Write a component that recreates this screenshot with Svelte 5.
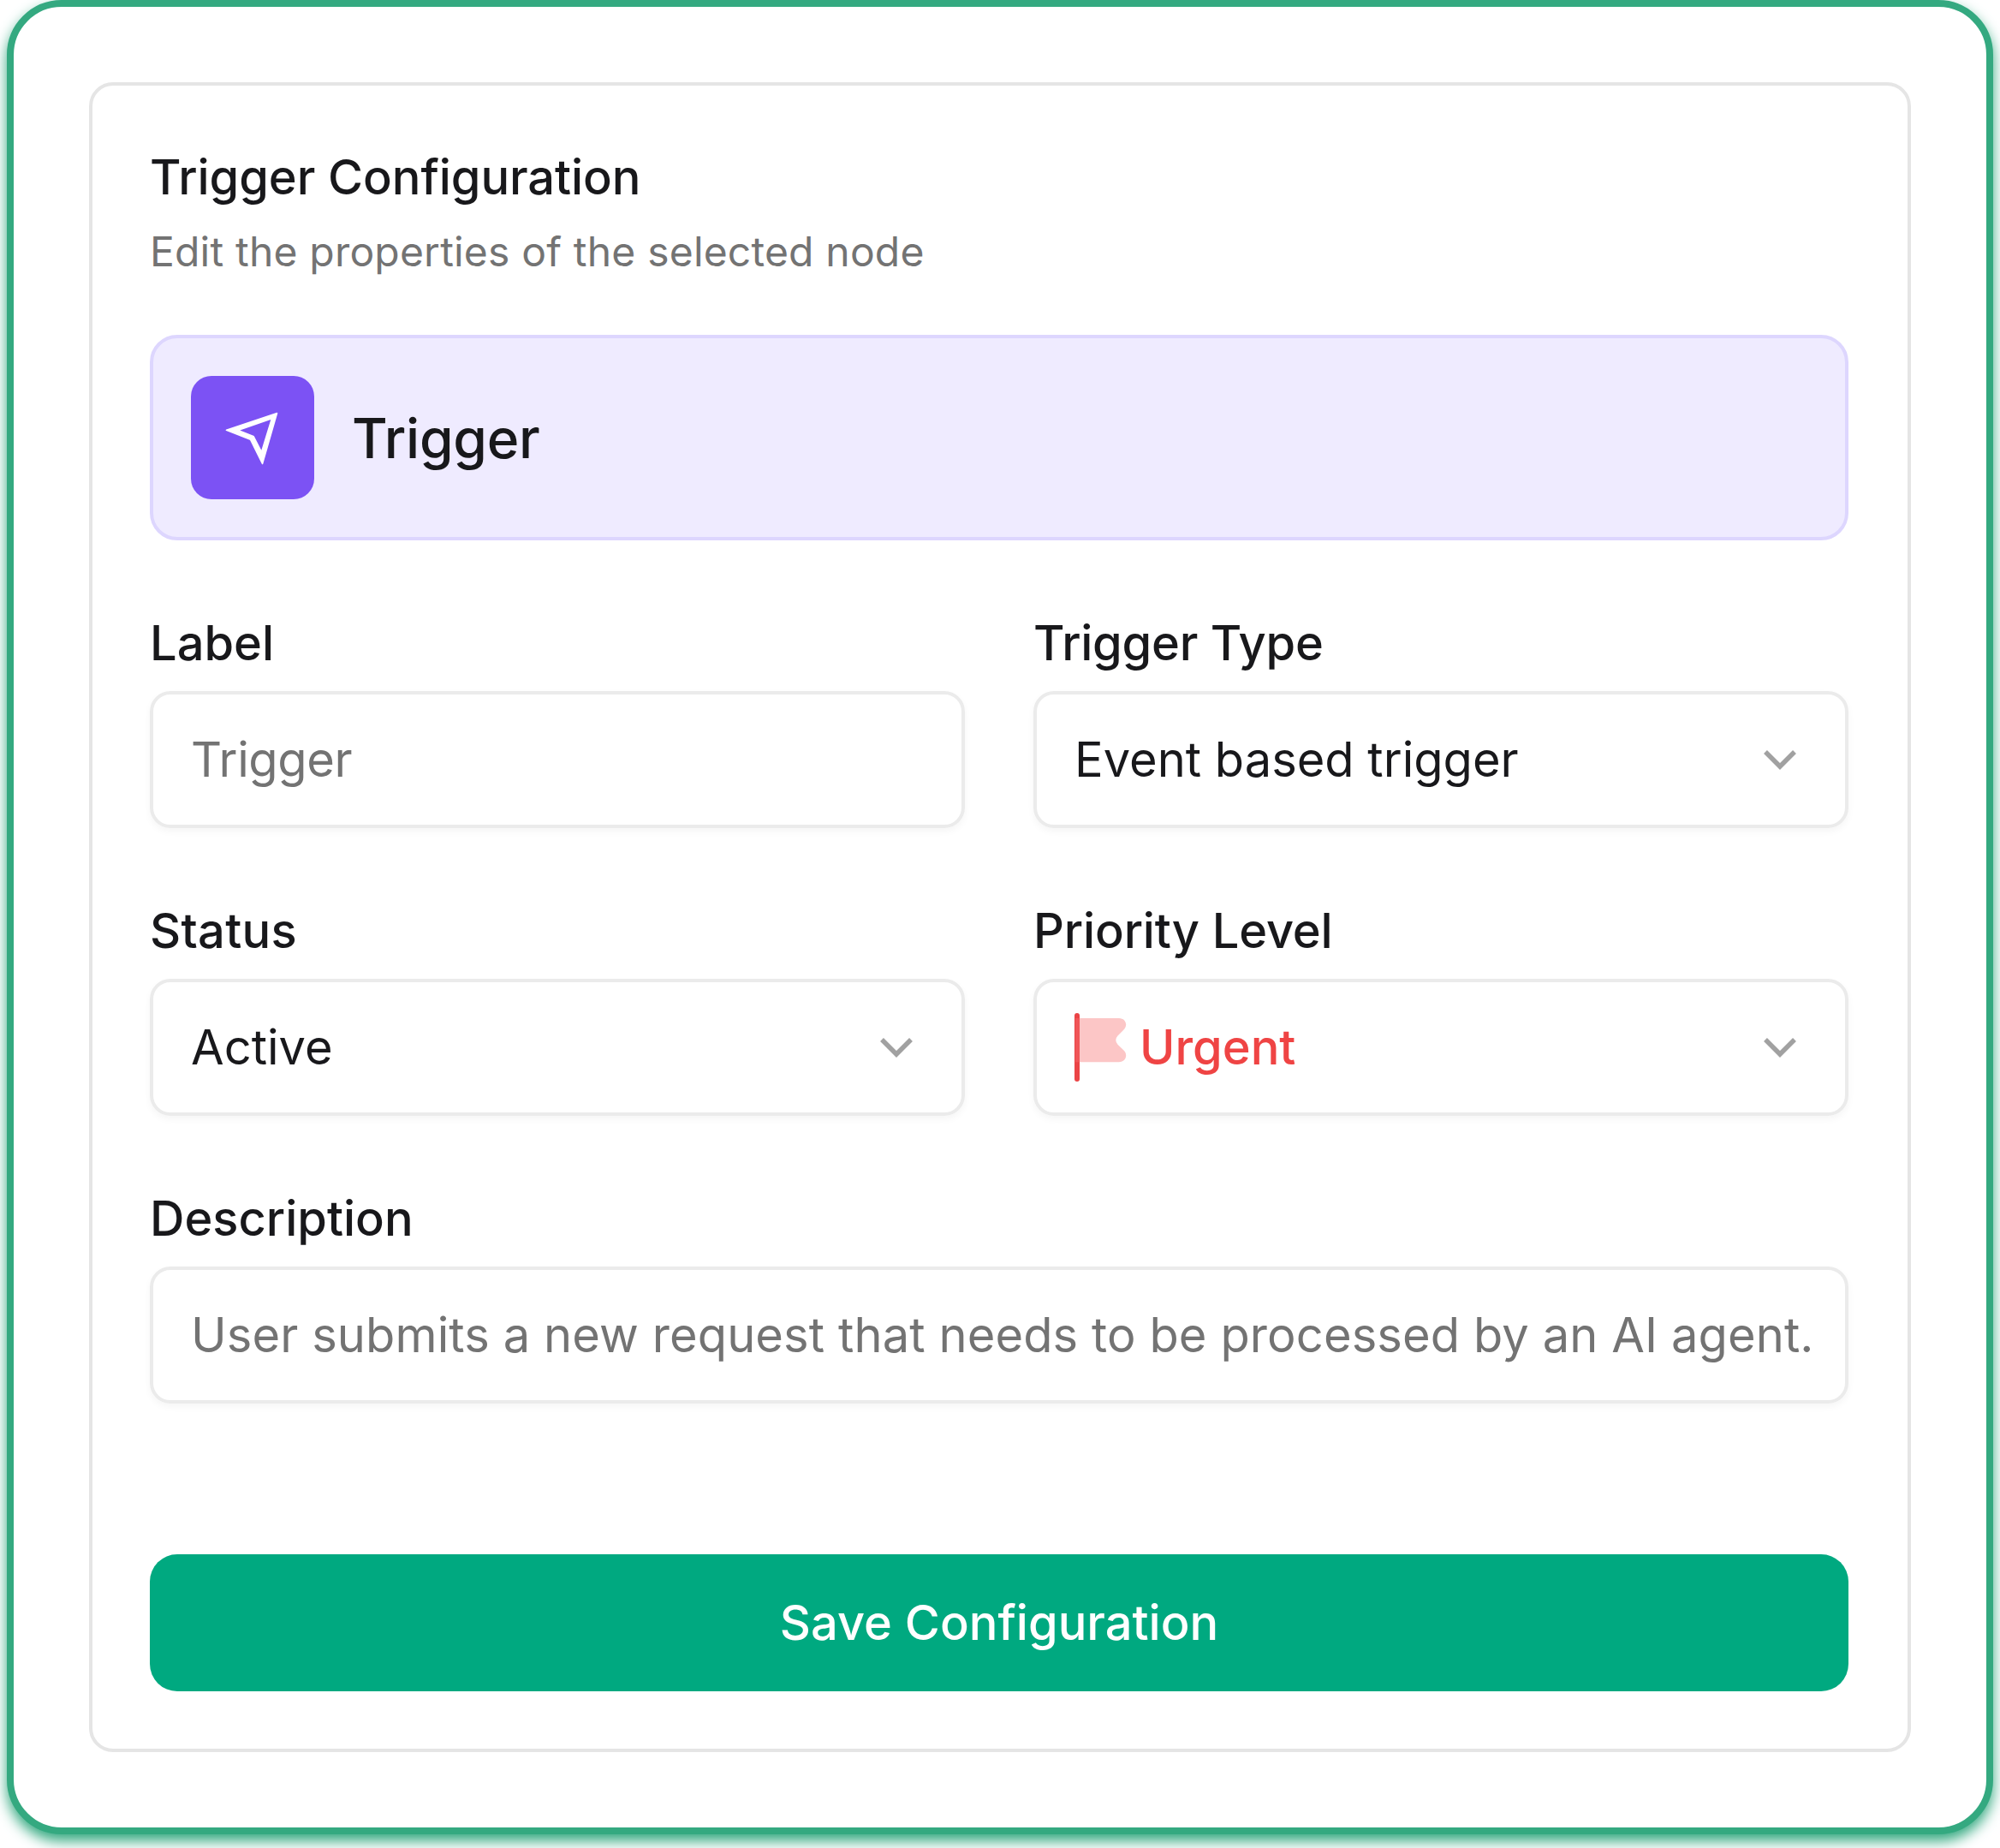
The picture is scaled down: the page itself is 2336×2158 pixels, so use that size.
<script lang="ts">
	type Field = {
		id: string;
		label: string;
		value: string;
		kind: 'text' | 'select';
		urgent?: boolean;
		wide?: boolean;
	};

	const fields: Field[] = [
		{ id: 'name', label: 'Label', value: 'Trigger', kind: 'text' },
		{ id: 'type', label: 'Trigger Type', value: 'Event based trigger', kind: 'select' },
		{ id: 'status', label: 'Status', value: 'Active', kind: 'select' },
		{ id: 'priority', label: 'Priority Level', value: 'Urgent', kind: 'select', urgent: true },
		{
			id: 'description',
			label: 'Description',
			value: 'User submits a new request that needs to be processed by an AI agent.',
			kind: 'text',
			wide: true
		}
	];
</script>

<main class="page">
	<div class="frame">
		<section class="card">
			<h1>Trigger Configuration</h1>
			<p class="subtitle">Edit the properties of the selected node</p>

			<div class="node">
				<div class="node-icon">
					<svg width="72" height="72" viewBox="0 0 72 72">
						<path
							d="M5.500 27.300L64.500 7.600L47.500 66.500L33.500 38.200Z M21.300 27.500L37.700 34L46.300 50.700L57.300 15Z"
							fill="#fff"
							fill-rule="evenodd"
						/>
						<path
							d="M5.500 27.300L64.500 7.600L47.500 66.500L33.500 38.200Z"
							fill="none"
							stroke="#fff"
							stroke-width="1.6"
							stroke-linejoin="round"
						/>
					</svg>
				</div>
				<span class="node-name">Trigger</span>
			</div>

			<div class="fields">
				{#each fields as field (field.id)}
					<div class="field {field.id}" class:wide={field.wide}>
						<span class="label">{field.label}</span>
						<div class="control" class:placeholder={field.kind === 'text'} class:urgent={field.urgent}>
							{#if field.urgent}
								<svg class="flag" width="64" height="80" viewBox="0 0 64 80">
									<path d="M3 3V77" stroke="#eb4446" stroke-width="6" stroke-linecap="round" />
									<path
										d="M1 6H52C60 6 63 15 57 20L50.500 26.500Q46 31.600 50.500 36.700L57 43C63 48 60 57.200 52 57.200H1Z"
										fill="#f87171"
										fill-opacity="0.4"
									/>
								</svg>
							{/if}
							<span class="value">{field.value}</span>
							{#if field.kind === 'select'}
								<svg class="chevron" width="38" height="23" viewBox="0 0 38 23" fill="none">
									<path d="M2 2L19 19L36 2" stroke="#a1a1a1" stroke-width="5.5" />
								</svg>
							{/if}
						</div>
					</div>
				{/each}
			</div>

			<button type="button">Save Configuration</button>
		</section>
	</div>
</main>

<style>
	:global(body) {
		background: #fff;
	}
	.page {
		box-sizing: border-box;
		height: 2158px;
		padding: 0 8px;
		overflow: hidden;
		font-family: Inter, sans-serif;
		color: #18181b;
	}
	.frame {
		box-sizing: border-box;
		height: 2142px;
		padding: 88px;
		border: 8px solid #34a980;
		border-radius: 64px;
		background: #fff;
		box-shadow: 0 8px 16px #34a980;
	}
	.card {
		box-sizing: border-box;
		height: 1950px;
		padding: 75px 69px 68px 67px;
		border: 4px solid #e5e5e5;
		border-radius: 28px;
	}
	h1 {
		margin: 0;
		font-size: 56px;
		font-weight: 500;
		line-height: 64px;
		letter-spacing: -0.08px;
	}
	.subtitle {
		margin: 23px 0 65px;
		font-size: 48px;
		line-height: 64px;
		letter-spacing: 0.19px;
		color: #737373;
	}
	.node {
		box-sizing: border-box;
		display: flex;
		align-items: center;
		gap: 44px;
		height: 240px;
		padding: 0 44px;
		border: 4px solid #ddd6fe;
		border-radius: 32px;
		background: #efebff;
	}
	.node-icon {
		display: flex;
		align-items: center;
		justify-content: center;
		width: 144px;
		height: 144px;
		border-radius: 24px;
		background: #7c52f4;
	}
	.node-name {
		font-size: 64px;
		font-weight: 500;
		letter-spacing: -0.3px;
	}
	.fields {
		display: grid;
		grid-template-columns: 1fr 1fr;
		gap: 92px 80px;
		margin-top: 92px;
	}
	.wide {
		grid-column: 1 / -1;
	}
	.label {
		display: block;
		margin-bottom: 28px;
		font-size: 56px;
		font-weight: 500;
		line-height: 56px;
	}
	.type .label {
		letter-spacing: -0.25px;
	}
	.status .label {
		letter-spacing: 0.3px;
	}
	.priority .label {
		letter-spacing: -0.15px;
	}
	.name .value {
		letter-spacing: -0.4px;
	}
	.description .value {
		letter-spacing: 0.1px;
	}
	.control {
		box-sizing: border-box;
		display: flex;
		align-items: center;
		height: 160px;
		padding: 0 44px;
		border: 4px solid #ebebeb;
		border-radius: 24px;
		box-shadow: 0 4px 8px rgba(0, 0, 0, 0.04);
		font-size: 56px;
		white-space: nowrap;
	}
	.placeholder {
		color: #737373;
	}
	.urgent {
		color: #ef4444;
		font-weight: 500;
	}
	.flag {
		margin-right: 12px;
	}
	.chevron {
		margin-left: auto;
		margin-right: 13px;
	}
	button {
		display: block;
		width: 100%;
		height: 160px;
		margin-top: 176px;
		padding: 0;
		border: 0;
		border-radius: 32px;
		background: #00a980;
		color: #fff;
		font: 500 56px Inter, sans-serif;
	}
</style>
